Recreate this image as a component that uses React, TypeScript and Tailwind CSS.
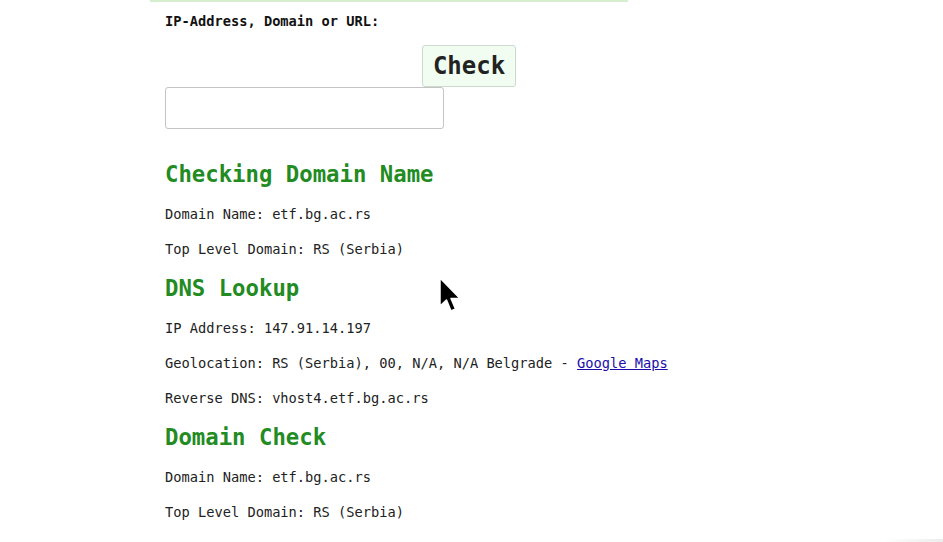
import React from "react";

const mono = { fontFamily: '"DejaVu Sans Mono", "Liberation Mono", monospace' };

function Para({ children }: { children: React.ReactNode }) {
  return <p className="text-[13.7px] leading-[18px] text-[#222] mb-[17px]">{children}</p>;
}

function Heading({ children }: { children: React.ReactNode }) {
  return (
    <h2 className="text-[22.3px] leading-[27px] font-bold text-[#228b22] mb-[17px]">{children}</h2>
  );
}

export default function App() {
  return (
    <div className="relative w-[943px] h-[542px] overflow-hidden bg-white" style={mono}>
      <div className="ml-[150px] w-[478px] h-[2px] bg-[#d6eed0]" />
      <div className="pl-[165px]">
        <div className="pt-[10px] text-[13.7px] leading-[18px] font-bold text-[#111]">
          IP-Address, Domain or URL:
        </div>
        <div className="w-[351px] flex flex-col items-end mt-[15px]">
          <button className="h-[42px] w-[94px] rounded-[3px] border border-[#cfd8cf] bg-[#f0fdf0] text-[24px] font-bold text-[#222] leading-none">
            Check
          </button>
        </div>
        <div className="w-[279px] h-[42px] rounded-[3px] border border-[#c4c4c4] bg-white" />
        <div className="mt-[32px]">
          <Heading>Checking Domain Name</Heading>
          <Para>Domain Name: etf.bg.ac.rs</Para>
          <Para>Top Level Domain: RS (Serbia)</Para>
          <Heading>DNS Lookup</Heading>
          <Para>IP Address: 147.91.14.197</Para>
          <Para>
            Geolocation: RS (Serbia), 00, N/A, N/A Belgrade -{" "}
            <a className="text-[#1a0dab] underline" href="#">Google Maps</a>
          </Para>
          <Para>Reverse DNS: vhost4.etf.bg.ac.rs</Para>
          <Heading>Domain Check</Heading>
          <Para>Domain Name: etf.bg.ac.rs</Para>
          <Para>Top Level Domain: RS (Serbia)</Para>
          <Para>-</Para>
        </div>
      </div>
      <div className="absolute right-0 bottom-0 w-[60px] h-[3px] bg-gradient-to-r from-transparent to-[#ececec]" />
      <svg className="absolute left-[438px] top-[276px]" width="26" height="42" viewBox="0 0 26 42">
        <path d="M2 2 L2 30 L8.5 24 L13 35 L17.5 33 L13 22.5 L22 22.5 Z" fill="#000" stroke="#fff" strokeWidth="1.5" strokeLinejoin="round" />
      </svg>
    </div>
  );
}
